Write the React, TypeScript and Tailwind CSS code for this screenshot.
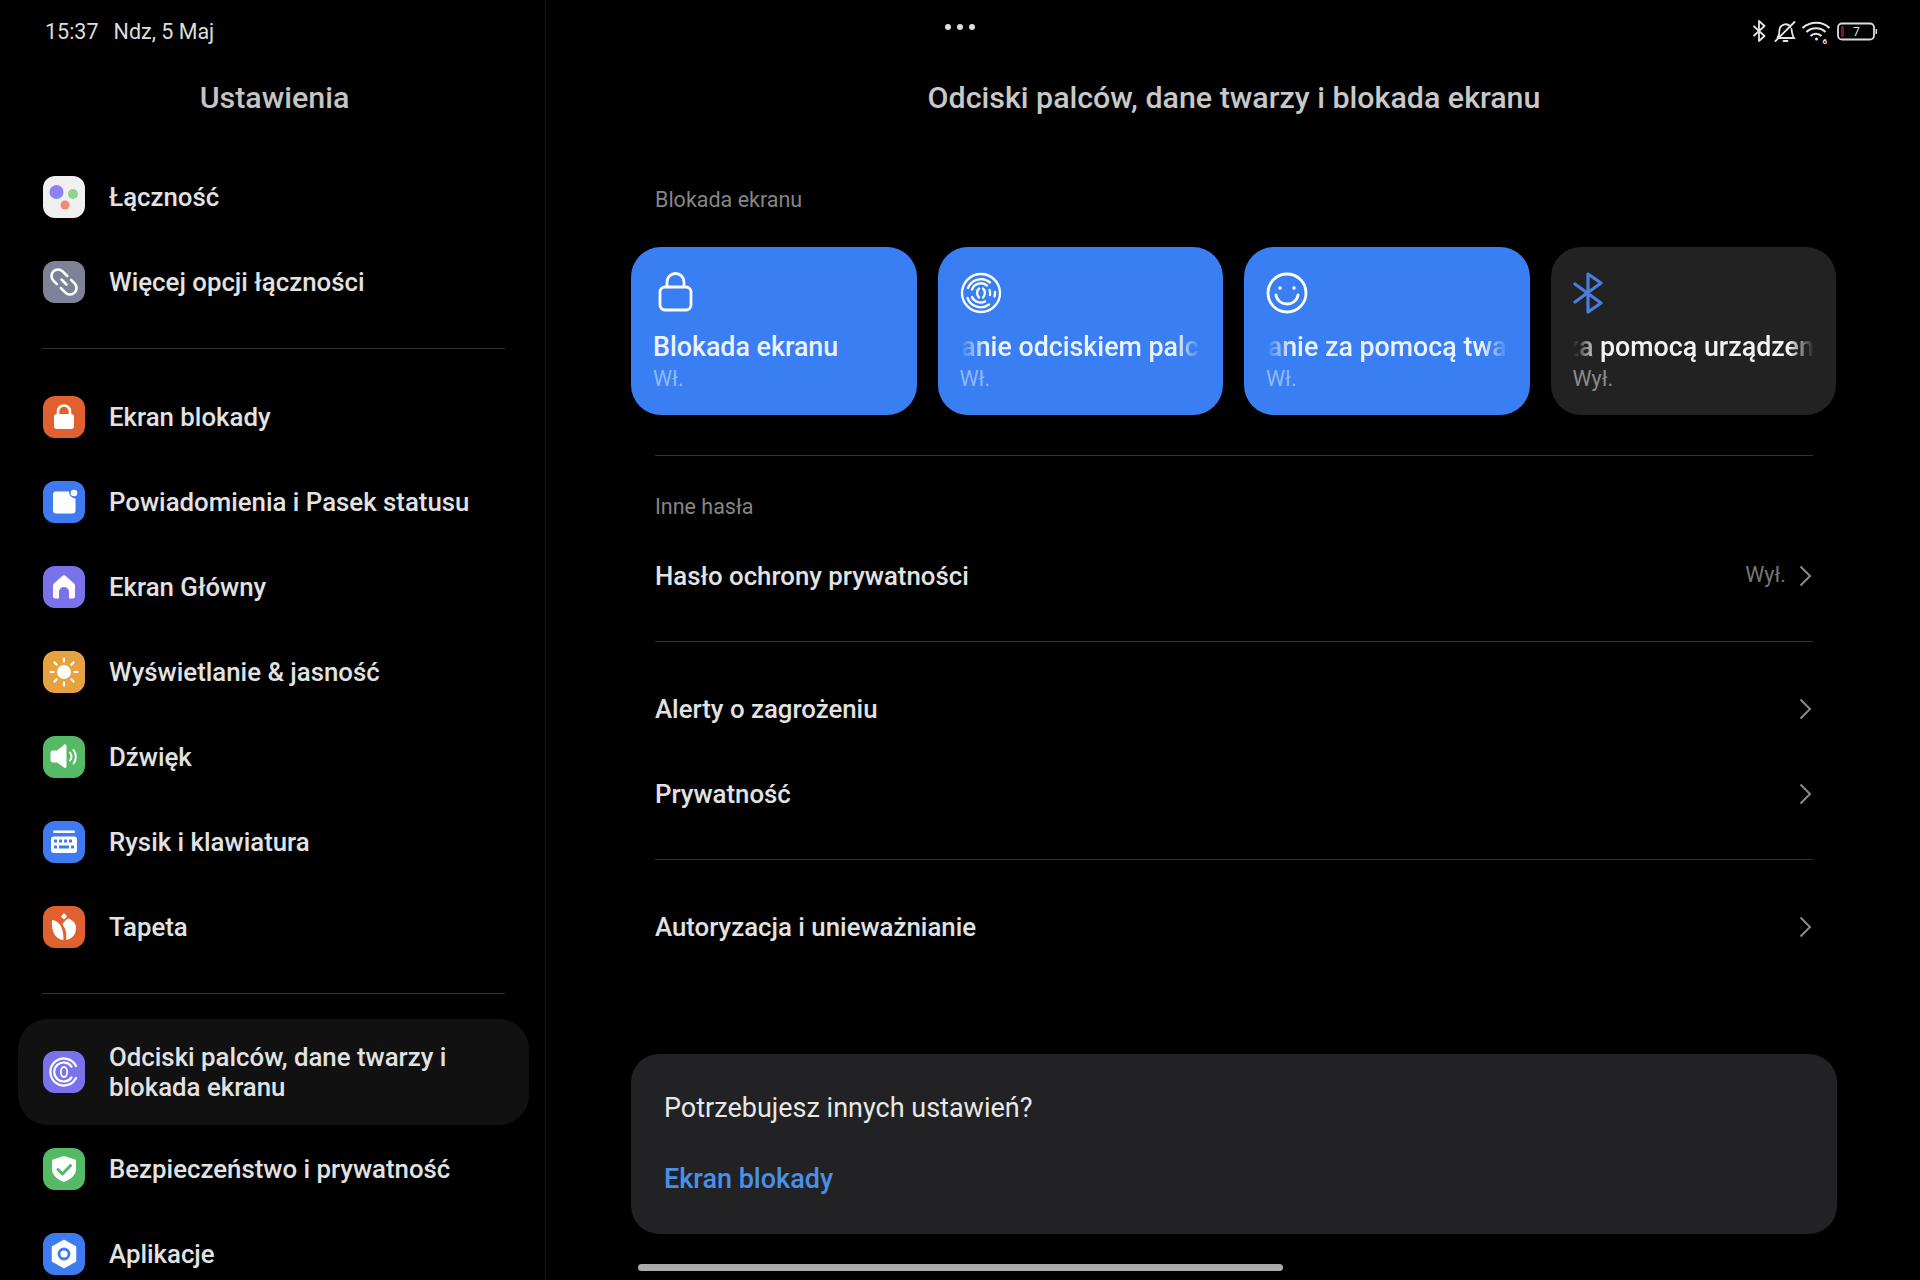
import React from "react";

const Tile = ({ bg, children }: { bg: string; children: React.ReactNode }) => (
  <svg viewBox="0 0 42 42" className="w-[42px] h-[42px] shrink-0">
    <rect width="42" height="42" rx="12" fill={bg} />
    {children}
  </svg>
);

const iconLaczn = (
  <Tile bg="#f0f0f0">
    <circle cx="13.5" cy="16" r="7" fill="#8b83f0" />
    <circle cx="30" cy="18" r="5" fill="#8fd48a" />
    <circle cx="22" cy="29" r="4.5" fill="#f08a78" />
  </Tile>
);
const iconLink = (
  <Tile bg="#7d8296">
    <g transform="rotate(45 21 21)" fill="none" stroke="#fff" strokeWidth="2.6" strokeLinecap="round">
      <path d="M19 14.5h-6.5a6.5 6.5 0 0 0 0 13h5" />
      <path d="M23 27.5h6.500a6.500 6.500 0 0 0 0-13h-5" />
      <path d="M17.500 21h7" />
    </g>
  </Tile>
);
const iconLock = (
  <Tile bg="#e0602f">
    <rect x="11" y="18" width="20" height="15" rx="3" fill="#fff" />
    <path d="M15 19v-3.5a6 6 0 0 1 12 0V19" fill="none" stroke="#fff" strokeWidth="2.6" />
  </Tile>
);
const iconNotif = (
  <Tile bg="#3f7bf0">
    <path d="M13 10.500h13c0 3.500 2.500 6.500 6.500 7V29.500a3 3 0 0 1-3 3H13a3 3 0 0 1-3-3v-16a3 3 0 0 1 3-3z" fill="#fff" />
    <circle cx="31" cy="12" r="3.300" fill="#fff" />
  </Tile>
);
const iconHome = (
  <Tile bg="#7a72ea">
    <path fillRule="evenodd" d="M19 10.200a3 3 0 0 1 4 0l8 7.300a3 3 0 0 1 1 2.300V30a2.500 2.500 0 0 1-2.500 2.500H26V26a5 5 0 0 0-10 0v6.500h-3.500A2.500 2.500 0 0 1 10 30V19.800a3 3 0 0 1 1-2.300z" fill="#fff" />
  </Tile>
);
const iconSun = (
  <Tile bg="#e5a23e">
    <circle cx="21" cy="21" r="7" fill="#fff" />
    <g stroke="#fff" strokeWidth="2.200" strokeLinecap="round">
      <path d="M21 7.500v3M21 31.500v3M7.500 21h3M31.500 21h3M11.500 11.500l2.100 2.100M28.400 28.400l2.100 2.100M30.500 11.500l-2.100 2.100M13.600 28.400l-2.100 2.100" />
    </g>
  </Tile>
);
const iconSound = (
  <Tile bg="#55ba65">
    <path d="M8 16.500a1.500 1.500 0 0 1 1.500-1.500H14l7-5.500a1 1 0 0 1 2 .5v20a1 1 0 0 1-2 1L14 26H9.500A1.500 1.500 0 0 1 8 24.500z" fill="#fff" stroke="#fff" strokeWidth="1" strokeLinejoin="round" />
    <path d="M27 16.500a6.500 6.500 0 0 1 0 8M30.500 14a11 11 0 0 1 0 13.500" fill="none" stroke="#fff" strokeWidth="2" strokeLinecap="round" />
  </Tile>
);
const iconKeyboard = (
  <Tile bg="#3f7bf0">
    <rect x="10" y="9.500" width="22" height="2.500" rx="1.200" fill="#fff" />
    <rect x="8" y="15.500" width="26" height="16.500" rx="3" fill="#fff" />
    <g fill="#3f7bf0">
      <rect x="11" y="18.500" width="3" height="3" />
      <rect x="16" y="18.500" width="3" height="3" />
      <rect x="21" y="18.500" width="3" height="3" />
      <rect x="26" y="18.500" width="3" height="3" />
      <rect x="11" y="24.500" width="3" height="3" />
      <rect x="16" y="24.500" width="10" height="3" />
      <rect x="28" y="24.500" width="3" height="3" />
    </g>
  </Tile>
);
const iconTulip = (
  <Tile bg="#e0602f">
    <path d="M21 7l3.200 3.400L21 13.500l-3.200-3.100z" fill="#fff" />
    <path d="M9 14c7 1 11.500 6.500 11.500 20C12.500 33.500 8 26 9 14z" fill="#fff" />
    <path d="M25.500 12.500c5 2 7.500 5 7.500 9.500 0 6-3.500 11-10 12 .8-6 0-11-3.500-15.500 1.500-3 3.500-5 6-6z" fill="#fff" />
  </Tile>
);
const iconFinger = (
  <Tile bg="#7a72ea">
    <g fill="none" stroke="#fff" strokeWidth="2.200" strokeLinecap="round">
      <path d="M33 15A13.500 13.500 0 1 0 33 27" />
      <path d="M28.500 15.500A9.500 9.500 0 1 0 28.500 26.500" />
      <ellipse cx="21" cy="21" rx="3.200" ry="5" strokeWidth="1.800" />
    </g>
  </Tile>
);
const iconShield = (
  <Tile bg="#55ba65">
    <path d="M21 8l11 3.500a1.500 1.500 0 0 1 1 1.500V21c0 6-5 10.500-12 13-7-2.500-12-7-12-13v-8a1.500 1.500 0 0 1 1-1.500z" fill="#fff" />
    <path d="M15 21.500l4.500 4.500 8-8.500" fill="none" stroke="#55ba65" strokeWidth="3" strokeLinecap="round" strokeLinejoin="round" />
  </Tile>
);
const iconApps = (
  <Tile bg="#3f7bf0">
    <path d="M21 7.500l11.500 6.500v14L21 34.500 9.500 28V14z" fill="#fff" stroke="#fff" strokeWidth="1.500" strokeLinejoin="round" />
    <circle cx="21" cy="21" r="5" fill="none" stroke="#3f7bf0" strokeWidth="2.800" />
  </Tile>
);

const SideRow = ({ icon, label }: { icon: React.ReactNode; label: string }) => (
  <div className="flex h-[85px] items-center gap-[24px] pl-[43px]">
    {icon}
    <span className="text-[25.8px] font-[480] leading-[30px] text-[#e2e2e2]">{label}</span>
  </div>
);

const SideDivider = () => <div className="ml-[42px] mr-[40px] h-px bg-[#333333]" />;

const Chevron = () => (
  <svg viewBox="0 0 14 22" className="h-[22px] w-[14px]">
    <path d="M2.500 1.500L12 11l-9.500 9.500" fill="none" stroke="#8a8a8a" strokeWidth="2" />
  </svg>
);

const MainRow = ({ label, value, className }: { label: string; value?: string; className: string }) => (
  <div className={`flex h-[85px] items-center justify-between pl-[24px] pr-[25px] ${className}`}>
    <span className="text-[25.8px] font-[480] leading-[30px] text-[#e2e2e2]">{label}</span>
    <div className="flex items-center gap-[12px]">
      {value && <span className="text-[21.5px] text-[#777777]">{value}</span>}
      <Chevron />
    </div>
  </div>
);

const Card = ({
  icon,
  title,
  shift,
  sub,
  dark,
  mask,
}: {
  icon: React.ReactNode;
  title: string;
  shift: string;
  sub: string;
  dark?: boolean;
  mask?: boolean;
}) => (
  <div className={`flex h-[168px] w-[285.5px] flex-col rounded-[30px] px-[22px] pt-[25px] ${dark ? "bg-[#222223]" : "bg-[#3a7ef3]"}`}>
    <div className="h-[41px]">{icon}</div>
    <div className={`mt-[16px] overflow-hidden whitespace-nowrap ${mask ? "[mask-image:linear-gradient(to_right,transparent,black_26px,black_216px,transparent)]" : ""}`}>
      <span className={`block text-[26.8px] font-[480] leading-[36px] ${dark ? "text-[#f2f2f2]" : "text-[#eaf2ff]"} ${shift}`}>{title}</span>
    </div>
    <span className={`mt-px text-[21.5px] leading-[26px] ${dark ? "text-[#8c8c8c]" : "text-[#8fbafa]"}`}>{sub}</span>
  </div>
);

export default function App() {
  return (
    <div className="relative flex h-[1280px] w-[1920px] overflow-hidden bg-black font-['Roboto',sans-serif]">
      <aside className="w-[546px] shrink-0 border-r border-[#141414]">
        <div className="flex h-[62px] items-start gap-[15px] pl-[45px] pt-[17px] text-[21.5px] leading-[30px] text-[#dddddd]">
          <span>15:37</span>
          <span>Ndz, 5 Maj</span>
        </div>
        <div className="flex h-[72px] items-center justify-center pl-[4px] text-[30.4px] font-[480] text-[#c4c4c4]">Ustawienia</div>
        <div className="pt-[20px]">
          <SideRow icon={iconLaczn} label="Łączność" />
          <SideRow icon={iconLink} label="Więcej opcji łączności" />
        </div>
        <div className="mb-[25px] mt-[24px]"><SideDivider /></div>
        <SideRow icon={iconLock} label="Ekran blokady" />
        <SideRow icon={iconNotif} label="Powiadomienia i Pasek statusu" />
        <SideRow icon={iconHome} label="Ekran Główny" />
        <SideRow icon={iconSun} label="Wyświetlanie & jasność" />
        <SideRow icon={iconSound} label="Dźwięk" />
        <SideRow icon={iconKeyboard} label="Rysik i klawiatura" />
        <SideRow icon={iconTulip} label="Tapeta" />
        <div className="mb-[25px] mt-[24px]"><SideDivider /></div>
        <div className="ml-[18px] mr-[16px] flex h-[106px] items-center gap-[24px] rounded-[30px] bg-[#111112] pl-[25px]">
          {iconFinger}
          <span className="text-[25.8px] font-[480] leading-[30px] text-[#e2e2e2]">
            Odciski palców, dane twarzy i<br />blokada ekranu
          </span>
        </div>
        <div className="pt-px">
          <SideRow icon={iconShield} label="Bezpieczeństwo i prywatność" />
          <SideRow icon={iconApps} label="Aplikacje" />
        </div>
      </aside>

      <main className="flex-1 pl-[85px] pr-[83px]">
        <div className="flex h-[62px] items-start justify-end pt-[20px]">
          <div className="mr-[-40px] flex items-start">
            <svg viewBox="0 0 124 24" className="h-[24px] w-[124px]" fill="none" stroke="#e6e6e6" strokeWidth="1.800">
              <g transform="translate(-1.500 0)">
                <path d="M2 6l11 10-5.500 5V1L13 6 2 16" strokeLinejoin="round" />
                <path d="M26 18c2-3 2-5 2-8a6 6 0 0 1 11-3M40 9c.5 4 1 7 2.500 9H27M24 21L43 2M32 21h4" strokeLinecap="round" />
                <path d="M51 8c8-7 20-7 27 0M55 12c5-5 14-5 19 0M59 16c3-3 8-3 11 0" strokeWidth="2.200" />
                <circle cx="65" cy="19" r="1.500" fill="#e6e6e6" stroke="none" />
                <text x="71" y="24" fontSize="8" fontWeight="700" fill="#e6e6e6" stroke="none">6</text>
              </g>
              <rect x="85" y="3.500" width="36" height="16" rx="4" stroke="#dddddd" />
              <rect x="88" y="6" width="3" height="11" rx="1" fill="#801818" stroke="none" />
              <text x="100" y="16" fontSize="12" fill="#e6e6e6" stroke="none">7</text>
              <rect x="122.500" y="9" width="1.500" height="5" fill="#dddddd" stroke="none" />
            </svg>
          </div>
        </div>
        <h1 className="flex h-[72px] items-center justify-center text-[30.4px] font-[480] text-[#c8c8c8]">
          Odciski palców, dane twarzy i blokada ekranu
        </h1>
        <div className="ml-[24px] mt-[46px] h-[40px] text-[21.5px] leading-[40px] text-[#858585]">Blokada ekranu</div>
        <div className="mt-[27px] flex gap-[21px]">
          <Card
            title="Blokada ekranu"
            shift=""
            sub="Wł."
            icon={
              <svg viewBox="0 0 40 40" className="h-[40px] w-[40px] ml-[4px]" fill="none" stroke="#fff" strokeWidth="2.800">
                <rect x="3" y="15" width="31" height="23" rx="5" />
                <path d="M10 15V10a8.500 8.500 0 0 1 17 0v5" />
              </svg>
            }
          />
          <Card
            mask
            title="Odblokowanie odciskiem palca"
            shift="ml-[-118px]"
            sub="Wł."
            icon={
              <svg viewBox="0 0 42 42" className="h-[42px] w-[42px]" fill="none" stroke="#fff" strokeWidth="2.300" strokeLinecap="round">
                <circle cx="21" cy="21" r="19" />
                <path d="M30 10.500A14 14 0 0 0 8 16M7.500 26A14 14 0 0 0 29 32.500M34.500 24.500Q35 22.500 35 20" />
                <path d="M27 13.500A9.500 9.500 0 0 0 12 17.500M12 25A9.500 9.500 0 0 0 25 29.500M30 23Q30.500 20.500 29.500 18" />
                <path d="M19 16.500c-2.500 2-2.500 7 0 9M23 16.500c2.500 2 2.500 7 0 9" />
              </svg>
            }
          />
          <Card
            mask
            title="Odblokowanie za pomocą twarzy"
            shift="ml-[-118px]"
            sub="Wł."
            icon={
              <svg viewBox="0 0 42 42" className="h-[42px] w-[42px]" fill="none" stroke="#fff" strokeWidth="2.800" strokeLinecap="round">
                <circle cx="21" cy="21" r="19" />
                <circle cx="14" cy="16" r="1.700" fill="#fff" stroke="none" />
                <circle cx="28" cy="16" r="1.700" fill="#fff" stroke="none" />
                <path d="M10 23c1 6 6 9 11 9s10-3 11-9" />
              </svg>
            }
          />
          <Card
            dark
            mask
            title="Odblokowanie za pomocą urządzenia"
            shift="ml-[-184px]"
            sub="Wył."
            icon={
              <svg viewBox="0 0 32 42" className="h-[42px] w-[32px]" fill="none" stroke="#4a7de0" strokeWidth="3.200" strokeLinecap="round" strokeLinejoin="round">
                <path d="M2 12l26 19-13 9V2l13 9L2 30" />
              </svg>
            }
          />
        </div>
        <div className="mx-[24px] mt-[40px] h-px bg-[#333333]" />
        <div className="ml-[24px] mt-[31px] h-[40px] text-[21.5px] leading-[40px] text-[#858585]">Inne hasła</div>
        <MainRow label="Hasło ochrony prywatności" value="Wył." className="mt-[6px]" />
        <div className="mx-[24px] mt-[23px] h-px bg-[#333333]" />
        <MainRow label="Alerty o zagrożeniu" className="mt-[24px]" />
        <MainRow label="Prywatność" className="" />
        <div className="mx-[24px] mt-[23px] h-px bg-[#333333]" />
        <MainRow label="Autoryzacja i unieważnianie" className="mt-[24px]" />
        <div className="mt-[85px] h-[180px] rounded-[28px] bg-[#222224] pl-[33px] pt-[37px]">
          <div className="text-[27px] leading-[34px] text-[#e8e8e8]">Potrzebujesz innych ustawień?</div>
          <div className="mt-[37px] text-[27px] font-medium leading-[34px] text-[#4a90e8]">Ekran blokady</div>
        </div>
      </main>

      <div className="absolute left-[945px] top-[24px] flex gap-[6px]">
        <span className="h-[6px] w-[6px] rounded-full bg-[#dddddd]" />
        <span className="h-[6px] w-[6px] rounded-full bg-[#dddddd]" />
        <span className="h-[6px] w-[6px] rounded-full bg-[#dddddd]" />
      </div>
      <div className="absolute left-[638px] top-[1264px] h-[7px] w-[645px] rounded-full bg-[#aaaaaa]" />
    </div>
  );
}
